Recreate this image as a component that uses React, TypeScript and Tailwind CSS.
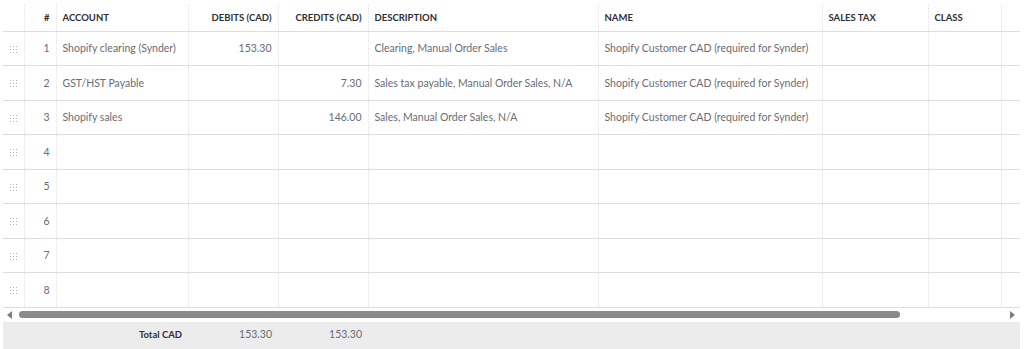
import React from "react";

type Line = {
  account: string;
  debit: string;
  credit: string;
  description: string;
  name: string;
};

const lines: Line[] = [
  { account: "Shopify clearing (Synder)", debit: "153.30", credit: "", description: "Clearing, Manual Order Sales", name: "Shopify Customer CAD (required for Synder)" },
  { account: "GST/HST Payable", debit: "", credit: "7.30", description: "Sales tax payable, Manual Order Sales, N/A", name: "Shopify Customer CAD (required for Synder)" },
  { account: "Shopify sales", debit: "", credit: "146.00", description: "Sales, Manual Order Sales, N/A", name: "Shopify Customer CAD (required for Synder)" },
  { account: "", debit: "", credit: "", description: "", name: "" },
  { account: "", debit: "", credit: "", description: "", name: "" },
  { account: "", debit: "", credit: "", description: "", name: "" },
  { account: "", debit: "", credit: "", description: "", name: "" },
  { account: "", debit: "", credit: "", description: "", name: "" },
];

const cell = "border-r border-dotted border-[#e2e2e2] px-[6px] pt-[2px] whitespace-nowrap overflow-hidden";

function DragHandle() {
  return (
    <svg width="7" height="7" viewBox="0 0 7 7" className="mx-auto block">
      {[0, 3, 6].map((y) =>
        [0, 3, 6].map((x) => <rect key={`${x}-${y}`} x={x} y={y} width="1" height="1" fill="#b3b3b3" />)
      )}
    </svg>
  );
}

export default function App() {
  return (
    <div className="w-[1024px] h-[349px] bg-white text-[10.5px] text-[#6b6c72]" style={{ fontFamily: "Lato, 'Open Sans', sans-serif" }}>
      <div className="ml-[3px] w-[1017px] pt-[4px] overflow-hidden">
        <table className="table-fixed border-collapse w-[1060px]">
          <colgroup>
            <col className="w-[21px]" />
            <col className="w-[32px]" />
            <col className="w-[132px]" />
            <col className="w-[90px]" />
            <col className="w-[90px]" />
            <col className="w-[230px]" />
            <col className="w-[224px]" />
            <col className="w-[106px]" />
            <col className="w-[73px]" />
            <col className="w-[62px]" />
          </colgroup>
          <thead>
            <tr className="h-[27px] border-b border-[#dedede] text-[9.5px] font-bold text-[#2f3033] uppercase">
              <th className={cell}></th>
              <th className={`${cell} text-right`}>#</th>
              <th className={`${cell} text-left`}>Account</th>
              <th className={`${cell} text-right`}>Debits (CAD)</th>
              <th className={`${cell} text-right`}>Credits (CAD)</th>
              <th className={`${cell} text-left`}>Description</th>
              <th className={`${cell} text-left`}>Name</th>
              <th className={`${cell} text-left`}>Sales Tax</th>
              <th className={`${cell} text-left`}>Class</th>
              <th className={cell}></th>
            </tr>
          </thead>
          <tbody>
            {lines.map((l, i) => (
              <tr key={i} className="h-[34.5px] border-b border-[#dedede]">
                <td className={cell}>
                  <DragHandle />
                </td>
                <td className={`${cell} text-right`}>{i + 1}</td>
                <td className={cell}>{l.account}</td>
                <td className={`${cell} text-right`}>{l.debit}</td>
                <td className={`${cell} text-right`}>{l.credit}</td>
                <td className={cell}>{l.description}</td>
                <td className={cell}>{l.name}</td>
                <td className={cell}></td>
                <td className={cell}></td>
                <td className={cell}></td>
              </tr>
            ))}
          </tbody>
        </table>
        <div className="h-[14px] flex items-center bg-white">
          <svg width="6" height="8" viewBox="0 0 6 8" className="ml-[4px]">
            <path d="M5 0 L0 4 L5 8 Z" fill="#7d7d7d" />
          </svg>
          <div className="ml-[6px] w-[881px] h-[7px] rounded-full bg-[#8a8a8a]" />
          <div className="flex-1" />
          <svg width="6" height="8" viewBox="0 0 6 8" className="mr-[5px]">
            <path d="M1 0 L6 4 L1 8 Z" fill="#7d7d7d" />
          </svg>
        </div>
        <div className="h-[27px] bg-[#ececec] flex items-center">
          <div className="w-[185px] pr-[6px] text-right font-bold text-[#2f3033] text-[9.5px]">Total CAD</div>
          <div className="w-[90px] pr-[6px] text-right">153.30</div>
          <div className="w-[90px] pr-[6px] text-right">153.30</div>
        </div>
      </div>
    </div>
  );
}
